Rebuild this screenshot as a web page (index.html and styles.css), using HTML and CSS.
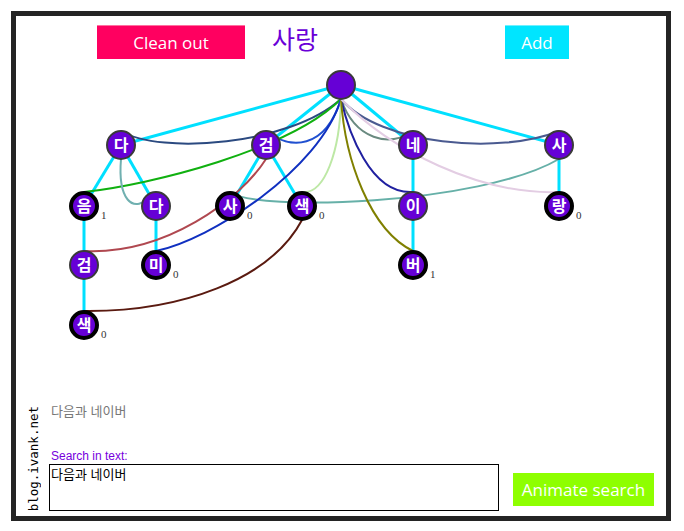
FILE: index.html
```html
<!DOCTYPE html>
<html lang="ko">
<head>
<meta charset="utf-8">
<title>Trie</title>
<link rel="stylesheet" href="styles.css">
</head>
<body>
<div class="frame">
  <div class="topbar">
    <div class="btn btn-clean">Clean out</div>
    <div class="title">사랑</div>
    <div class="btn btn-add">Add</div>
  </div>
  <svg class="graph" width="650" height="336" viewBox="16 59 650 336" xmlns="http://www.w3.org/2000/svg">
    <g class="edges" stroke="#00e0ff" stroke-width="3" fill="none">
      <line x1="341" y1="85" x2="121" y2="145"/>
      <line x1="341" y1="85" x2="266" y2="145"/>
      <line x1="341" y1="85" x2="413" y2="145"/>
      <line x1="341" y1="85" x2="559" y2="145"/>
      <line x1="121" y1="145" x2="84" y2="206"/>
      <line x1="121" y1="145" x2="156" y2="206"/>
      <line x1="266" y1="145" x2="230" y2="206"/>
      <line x1="266" y1="145" x2="302" y2="206"/>
      <line x1="413" y1="145" x2="413" y2="206"/>
      <line x1="559" y1="145" x2="559" y2="206"/>
      <line x1="84" y1="206" x2="84" y2="265"/>
      <line x1="156" y1="206" x2="156" y2="265"/>
      <line x1="413" y1="206" x2="413" y2="265"/>
      <line x1="84" y1="265" x2="84" y2="325"/>
    </g>
    <g class="links" fill="none" stroke-width="2">
      <path stroke="#2b4a80" d="M121 131 C160 155 290 145 341 99"/>
      <path stroke="#2050d0" d="M266 131 C290 150 325 150 341 99"/>
      <path stroke="#10b010" d="M84 192 C150 185 290 150 341 99"/>
      <path stroke="#70b0b0" d="M156 192 C130 220 118 195 121 159"/>
      <path stroke="#66b0a8" d="M230 192 C255 212 480 205 559 159"/>
      <path stroke="#b04850" d="M84 251 C165 255 240 200 266 159"/>
      <path stroke="#1030c0" d="M156 251 C210 240 320 170 341 99"/>
      <path stroke="#bde8a5" d="M302 192 C325 195 340 150 341 99"/>
      <path stroke="#5a1a10" d="M84 311 C180 312 270 280 302 220"/>
      <path stroke="#6a8a80" d="M413 131 C390 148 355 140 341 99"/>
      <path stroke="#2020a0" d="M413 192 C370 195 348 130 341 99"/>
      <path stroke="#808000" d="M413 251 C370 230 345 160 341 99"/>
      <path stroke="#4a5a90" d="M559 131 C500 155 380 145 341 99"/>
      <path stroke="#e3cde3" d="M559 192 C480 195 390 150 341 99"/>
    </g>
    <g class="nodes">
      <circle class="node" cx="341" cy="85" r="14"/>
      <circle class="node" cx="121" cy="145" r="14"/>
      <circle class="node" cx="266" cy="145" r="14"/>
      <circle class="node" cx="413" cy="145" r="14"/>
      <circle class="node" cx="559" cy="145" r="14"/>
      <circle class="node end" cx="84" cy="206" r="13"/>
      <circle class="node" cx="156" cy="206" r="14"/>
      <circle class="node end" cx="230" cy="206" r="13"/>
      <circle class="node end" cx="302" cy="206" r="13"/>
      <circle class="node" cx="413" cy="206" r="14"/>
      <circle class="node end" cx="559" cy="206" r="13"/>
      <circle class="node" cx="84" cy="265" r="14"/>
      <circle class="node end" cx="156" cy="265" r="13"/>
      <circle class="node end" cx="413" cy="265" r="13"/>
      <circle class="node end" cx="84" cy="325" r="13"/>
    </g>
    <g class="labels">
      <text x="121" y="144">다</text>
      <text x="266" y="144">검</text>
      <text x="413" y="144">네</text>
      <text x="559" y="144">사</text>
      <text x="84" y="205">음</text>
      <text x="156" y="205">다</text>
      <text x="230" y="205">사</text>
      <text x="302" y="205">색</text>
      <text x="413" y="205">이</text>
      <text x="559" y="205">랑</text>
      <text x="84" y="264">검</text>
      <text x="156" y="264">미</text>
      <text x="413" y="264">버</text>
      <text x="84" y="324">색</text>
    </g>
    <g class="counts">
      <text x="101" y="219">1</text>
      <text x="247" y="219">0</text>
      <text x="319" y="219">0</text>
      <text x="576" y="219">0</text>
      <text x="173" y="278">0</text>
      <text x="430" y="278">1</text>
      <text x="101" y="338">0</text>
    </g>
  </svg>
  <div class="bottom">
    <div class="credit">blog.ivank.net</div>
    <div class="main">
      <div class="result">다음과 네이버</div>
      <div class="label">Search in text:</div>
      <div class="textarea">다음과 네이버</div>
    </div>
    <div class="btn btn-animate">Animate search</div>
  </div>
</div>
</body>
</html>
```
FILE: styles.css
```css
html, body {
  margin: 0;
  padding: 0;
  background: #fff;
}
body {
  font-family: "Open Sans", "Noto Sans CJK KR", sans-serif;
}
.frame {
  margin: 11px 0 0 11px;
  width: 660px;
  height: 510px;
  box-sizing: border-box;
  border: 5px solid #242424;
  display: flex;
  flex-direction: column;
}
.topbar {
  display: flex;
  align-items: flex-start;
  padding-left: 81px;
  margin-top: 9px;
  height: 34px;
}
.btn {
  color: #fff;
  font-family: "Open Sans", sans-serif;
  font-size: 17px;
  display: flex;
  align-items: center;
  justify-content: center;
  box-sizing: border-box;
}
.btn-clean {
  width: 148px;
  height: 34px;
  background: #ff0060;
  border-top: 1px solid #ff6f9f;
}
.title {
  width: 50px;
  margin-left: 27px;
  margin-top: -4px;
  font-family: "Noto Sans CJK KR", sans-serif;
  font-size: 25px;
  line-height: 34px;
  color: #6a00d8;
}
.btn-add {
  width: 64px;
  height: 34px;
  margin-left: 183px;
  background: #00e5ff;
  border-top: 1px solid #6ff0ff;
}
.graph {
  display: block;
}
.node {
  fill: #6600d6;
  stroke: #3a3a3a;
  stroke-width: 2;
}
.node.end {
  stroke: #000;
  stroke-width: 4;
}
.labels text {
  fill: #fff;
  font-family: "Noto Sans CJK KR", sans-serif;
  font-weight: 700;
  font-size: 16px;
  text-anchor: middle;
  dominant-baseline: central;
}
.counts text {
  fill: #333;
  font-family: "Liberation Serif", serif;
  font-size: 11px;
}
.bottom {
  margin-top: auto;
  display: flex;
  align-items: flex-end;
  padding: 0 0 5px 11px;
}
.credit {
  writing-mode: vertical-rl;
  transform: rotate(180deg);
  font-family: "DejaVu Sans Mono", monospace;
  font-size: 12.5px;
  line-height: 13px;
  color: #000;
  width: 13px;
}
.main {
  margin-left: 9px;
  width: 450px;
  display: flex;
  flex-direction: column;
}
.result {
  font-family: "Noto Sans CJK KR", sans-serif;
  font-size: 13px;
  line-height: 20px;
  color: #777;
  padding-left: 2px;
  margin-bottom: 28px;
}
.label {
  font-family: "Liberation Sans", sans-serif;
  font-size: 12px;
  line-height: 15px;
  color: #7700dd;
  padding-left: 2px;
}
.textarea {
  height: 47px;
  box-sizing: border-box;
  border: 1px solid #000;
  font-family: "Noto Sans CJK KR", sans-serif;
  font-size: 13px;
  line-height: 16px;
  padding: 1px 1px;
  color: #000;
}
.btn-animate {
  width: 141px;
  height: 33px;
  margin: 0 0 5px 14px;
  background: #8eff00;
  font-size: 17px;
}
```
